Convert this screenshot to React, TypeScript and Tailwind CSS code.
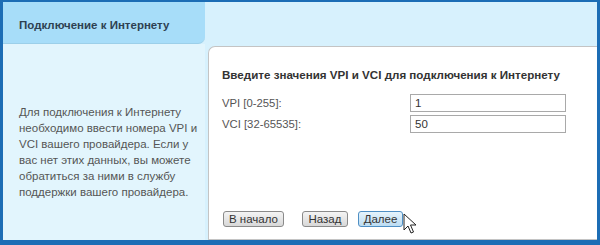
import React from "react";

export default function App() {
  const font = { fontFamily: '"Liberation Sans", Arial, sans-serif' };
  return (
    <div
      className="w-[600px] h-[245px] overflow-hidden bg-[#1c6db5] pl-[3px] pr-[3px] pt-[2px] pb-[5px]"
      style={font}
    >
      <div className="h-full w-full bg-[#d7f1fd] grid grid-cols-[202px_1fr] grid-rows-[42px_1fr]">
        <div className="bg-[#a7ddf9] rounded-br-[7px] flex items-center pl-[16px] pt-[6px] border-b border-[#9ccfe9]">
          <span className="text-[11.5px] font-bold text-[#2e4152]">Подключение к Интернету</span>
        </div>
        <div className="bg-[#d7f1fd]" />
        <div className="bg-[#e2f5fd] flex items-center pl-[16px] pr-[4px] pt-[20px]">
          <p className="text-[11.5px] leading-[16px] text-[#555]">
            Для подключения к Интернету необходимо ввести номера VPI и VCI вашего провайдера. Если у вас нет этих данных, вы можете обратиться за ними в службу поддержки вашего провайдера.
          </p>
        </div>
        <div className="bg-[#d7f1fd] pl-[3px] pt-[2px]">
          <div className="relative h-full bg-white border-t border-l border-b border-[#c4c4c4] rounded-tl-[7px] pl-[13px] pr-[31px] pt-[19px] flex flex-col">
            <div className="text-[11.6px] font-bold text-[#333] whitespace-nowrap">Введите значения VPI и VCI для подключения к Интернету</div>
            <div className="mt-[11px] flex items-center justify-between text-[11.3px] text-[#555]">
              <span>VPI [0-255]:</span>
              <div className="w-[156px] h-[18px] border border-[#a9a9a9] pl-[4px] flex items-center text-[11.5px] text-[#333]">1</div>
            </div>
            <div className="mt-[3px] flex items-center justify-between text-[11.3px] text-[#555]">
              <span>VCI [32-65535]:</span>
              <div className="w-[156px] h-[18px] border border-[#a9a9a9] pl-[4px] flex items-center text-[11.5px] text-[#333]">50</div>
            </div>
            <div className="mt-auto mb-[12px] flex items-center">
              <button className="h-[16px] w-[61px] ml-[1px] border border-[#8a8a8a] rounded-[3px] bg-gradient-to-b from-[#f4f4f4] to-[#d8d8d8] text-[11.5px] leading-[14px] text-[#333]">В начало</button>
              <button className="h-[16px] w-[46px] ml-[18px] border border-[#8a8a8a] rounded-[3px] bg-gradient-to-b from-[#f4f4f4] to-[#d8d8d8] text-[11.5px] leading-[14px] text-[#333]">Назад</button>
              <button className="h-[16px] w-[45px] ml-[10px] border border-[#4f8fc4] rounded-[3px] bg-gradient-to-b from-[#e6f4fc] to-[#bcdcf2] text-[11.5px] leading-[14px] text-[#333]">Далее</button>
            </div>
            <svg className="absolute left-[194px] top-[166px]" width="14" height="22" viewBox="0 0 14 22">
              <path d="M1 1 L1 17 L5 13 L8 20 L10.5 19 L7.5 12 L13 12 Z" fill="#fff" stroke="#222" strokeWidth="1" strokeLinejoin="round" />
            </svg>
          </div>
        </div>
      </div>
    </div>
  );
}
